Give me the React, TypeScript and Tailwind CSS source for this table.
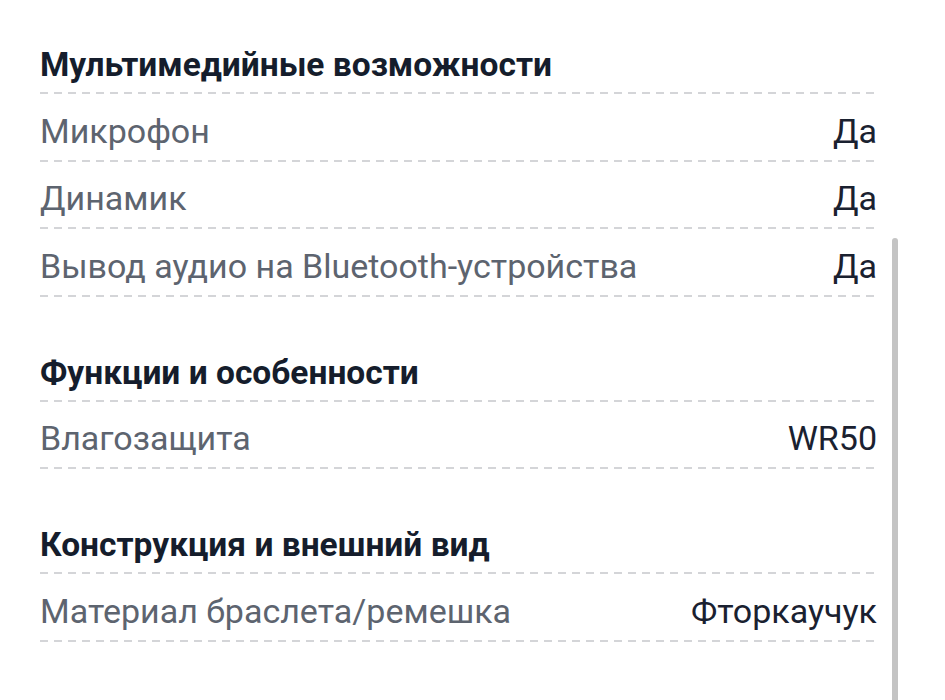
import React from "react";

type Row = { label: string; value: string };
type Section = { title: string; rows: Row[] };

const sections: Section[] = [
  {
    title: "Мультимедийные возможности",
    rows: [
      { label: "Микрофон", value: "Да" },
      { label: "Динамик", value: "Да" },
      { label: "Вывод аудио на Bluetooth-устройства", value: "Да" },
    ],
  },
  {
    title: "Функции и особенности",
    rows: [{ label: "Влагозащита", value: "WR50" }],
  },
  {
    title: "Конструкция и внешний вид",
    rows: [{ label: "Материал браслета/ремешка", value: "Фторкаучук" }],
  },
];

function Dash() {
  return (
    <div className="h-[2px] w-full bg-[repeating-linear-gradient(to_right,#d4d5d8_0px,#d4d5d8_8px,transparent_8px,transparent_14px)]" />
  );
}

export default function App() {
  return (
    <div
      className="relative h-[700px] w-[945px] overflow-hidden bg-white"
      style={{ fontFamily: "Roboto, 'Noto Sans', sans-serif" }}
    >
      <div className="flex flex-col pl-[40px] pr-[68px] pt-[45px]">
        {sections.map((s, i) => (
          <div key={s.title} className={i === 0 ? "flex flex-col" : "mt-[56px] flex flex-col"}>
            <div className="pb-[7px] text-[33.5px] font-bold leading-[40px] text-[#151d2c]">
              {s.title}
            </div>
            <Dash />
            {s.rows.map((r) => (
              <div key={r.label} className="flex flex-col">
                <div className="flex items-center justify-between pb-[9px] pt-[16.5px] text-[34px] leading-[40px]">
                  <span className="text-[#5d646f]">{r.label}</span>
                  <span className="text-[#1a2130]">{r.value}</span>
                </div>
                <Dash />
              </div>
            ))}
          </div>
        ))}
      </div>
      <div className="absolute left-[892px] top-[238px] h-[480px] w-[6px] rounded-full bg-[#c4c4c4]" />
    </div>
  );
}
